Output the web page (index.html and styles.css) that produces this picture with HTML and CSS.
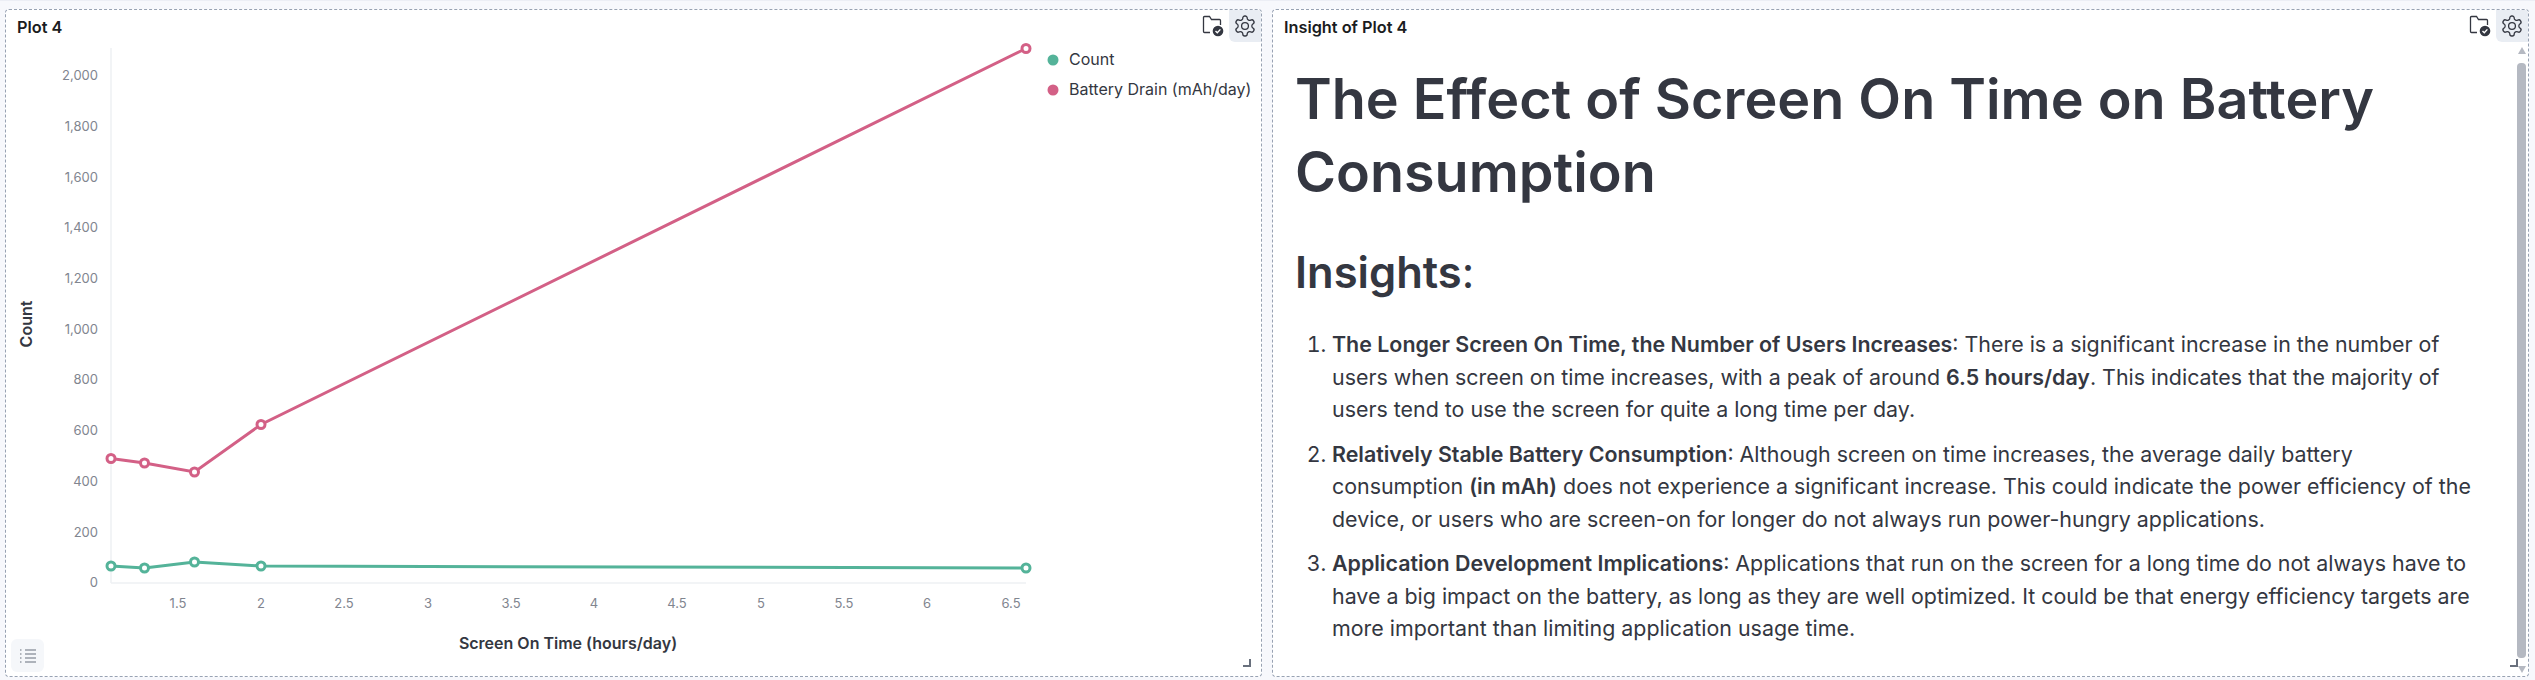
FILE: index.html

```html
<!DOCTYPE html>
<html lang='en-US'>
	<head>
		<title>Plot 4</title>
		<meta charset='utf-8'>
		<link rel="stylesheet" href="styles.css">
	</head>
	<body>
		<main class='dash'>
			<section class='panel'>
				<header class='panel-head'>
					<h3>Plot 4</h3>
					<span class='tool'>
						<svg width='22' height='22' viewBox='0 0 22 22' fill='none' stroke='#343741' stroke-width='1.3'><path d='M8 17.500H2.500a1 1 0 0 1-1-1V2.500a1 1 0 0 1 1-1h5l2 3h8a1 1 0 0 1 1 1V10'/><circle cx='16' cy='16' r='5.300' fill='#343741' stroke='none'/><path d='M13.500 16l1.800 1.800 3.100-3.400' stroke='#fff' stroke-width='1.400'/></svg>
					</span>
					<span class='tool tool-on'>
						<svg width='24' height='24' viewBox='0 0 24 24' fill='none' stroke='#343741' stroke-width='1.300'><path d='M12.220 2h-.44a2 2 0 0 0-2 2v.18a2 2 0 0 1-1 1.730l-.43.25a2 2 0 0 1-2 0l-.15-.08a2 2 0 0 0-2.730.73l-.22.38a2 2 0 0 0 .73 2.730l.15.1a2 2 0 0 1 1 1.720v.51a2 2 0 0 1-1 1.740l-.15.09a2 2 0 0 0-.73 2.730l.22.38a2 2 0 0 0 2.730.73l.15-.08a2 2 0 0 1 2 0l.43.25a2 2 0 0 1 1 1.730V20a2 2 0 0 0 2 2h.44a2 2 0 0 0 2-2v-.18a2 2 0 0 1 1-1.730l.43-.25a2 2 0 0 1 2 0l.15.08a2 2 0 0 0 2.730-.73l.22-.39a2 2 0 0 0-.73-2.730l-.15-.08a2 2 0 0 1-1-1.740v-.5a2 2 0 0 1 1-1.740l.15-.09a2 2 0 0 0 .73-2.730l-.22-.38a2 2 0 0 0-2.730-.73l-.15.08a2 2 0 0 1-2 0l-.43-.25a2 2 0 0 1-1-1.730V4a2 2 0 0 0-2-2z'/><circle cx='12' cy='12' r='3.400'/></svg>
					</span>
				</header>
				<svg class='chart' width='1255' height='668' viewBox='0 0 1255 668'>
					<g class='grid'>
						<line x1='105' y1='38' x2='105' y2='573'/>
						<line x1='105' y1='573' x2='1020' y2='573'/>
					</g>
					<g class='ticks' text-anchor='end'>
						<text x='92' y='70'>2,000</text>
						<text x='92' y='121'>1,800</text>
						<text x='92' y='172'>1,600</text>
						<text x='92' y='222'>1,400</text>
						<text x='92' y='273'>1,200</text>
						<text x='92' y='324'>1,000</text>
						<text x='92' y='374'>800</text>
						<text x='92' y='425'>600</text>
						<text x='92' y='476'>400</text>
						<text x='92' y='527'>200</text>
						<text x='92' y='577'>0</text>
					</g>
					<g class='ticks' text-anchor='middle'>
						<text x='172' y='598'>1.5</text>
						<text x='255' y='598'>2</text>
						<text x='338' y='598'>2.5</text>
						<text x='422' y='598'>3</text>
						<text x='505' y='598'>3.5</text>
						<text x='588' y='598'>4</text>
						<text x='671' y='598'>4.5</text>
						<text x='755' y='598'>5</text>
						<text x='838' y='598'>5.5</text>
						<text x='921' y='598'>6</text>
						<text x='1005' y='598'>6.5</text>
					</g>
					<text class='axis' x='562' y='639' text-anchor='middle'>Screen On Time (hours/day)</text>
					<text class='axis' transform='translate(26 314) rotate(-90)' text-anchor='middle'>Count</text>
					<polyline class='line-a' points='105,556 138.500,558 188.500,552 255,556 1020,558'/>
					<polyline class='line-b' points='105,448.500 138.500,453 188.500,462 255,414.500 1020,38.500'/>
					<g class='dots-a'>
						<circle cx='105' cy='556' r='4'/><circle cx='138.500' cy='558' r='4'/><circle cx='188.500' cy='552' r='4'/><circle cx='255' cy='556' r='4'/><circle cx='1020' cy='558' r='4'/>
					</g>
					<g class='dots-b'>
						<circle cx='105' cy='448.500' r='4'/><circle cx='138.500' cy='453' r='4'/><circle cx='188.500' cy='462' r='4'/><circle cx='255' cy='414.500' r='4'/><circle cx='1020' cy='38.500' r='4'/>
					</g>
					<circle cx='1047' cy='50' r='5.500' fill='#54b399'/>
					<text class='legend' x='1063' y='55'>Count</text>
					<circle cx='1047' cy='80' r='5.500' fill='#d36086'/>
					<text class='legend' x='1063' y='85'>Battery Drain (mAh/day)</text>
				</svg>
				<span class='list-btn'>
					<svg width='16' height='14' viewBox='0 0 16 14' stroke='#69707d' stroke-width='1.200'><path d='M0 1h2M0 5h2M0 9h2M0 13h2' stroke-dasharray='1.500 .5'/><path d='M5 1h11M5 5h11M5 9h11M5 13h11'/></svg>
				</span>
				<i class='grip'></i>
			</section>
			<section class='panel'>
				<header class='panel-head'>
					<h3>Insight of Plot 4</h3>
					<span class='tool'>
						<svg width='22' height='22' viewBox='0 0 22 22' fill='none' stroke='#343741' stroke-width='1.3'><path d='M8 17.500H2.500a1 1 0 0 1-1-1V2.500a1 1 0 0 1 1-1h5l2 3h8a1 1 0 0 1 1 1V10'/><circle cx='16' cy='16' r='5.300' fill='#343741' stroke='none'/><path d='M13.500 16l1.800 1.800 3.100-3.400' stroke='#fff' stroke-width='1.400'/></svg>
					</span>
					<span class='tool tool-on'>
						<svg width='24' height='24' viewBox='0 0 24 24' fill='none' stroke='#343741' stroke-width='1.300'><path d='M12.220 2h-.44a2 2 0 0 0-2 2v.18a2 2 0 0 1-1 1.730l-.43.25a2 2 0 0 1-2 0l-.15-.08a2 2 0 0 0-2.730.73l-.22.38a2 2 0 0 0 .73 2.730l.15.1a2 2 0 0 1 1 1.720v.51a2 2 0 0 1-1 1.740l-.15.09a2 2 0 0 0-.73 2.730l.22.38a2 2 0 0 0 2.730.73l.15-.08a2 2 0 0 1 2 0l.43.25a2 2 0 0 1 1 1.730V20a2 2 0 0 0 2 2h.44a2 2 0 0 0 2-2v-.18a2 2 0 0 1 1-1.730l.43-.25a2 2 0 0 1 2 0l.15.08a2 2 0 0 0 2.730-.73l.22-.39a2 2 0 0 0-.73-2.730l-.15-.08a2 2 0 0 1-1-1.740v-.5a2 2 0 0 1 1-1.740l.15-.09a2 2 0 0 0 .73-2.730l-.22-.38a2 2 0 0 0-2.730-.73l-.15.08a2 2 0 0 1-2 0l-.43-.25a2 2 0 0 1-1-1.730V4a2 2 0 0 0-2-2z'/><circle cx='12' cy='12' r='3.400'/></svg>
					</span>
				</header>
				<article class='md'>
					<h1>The Effect of Screen On Time on Battery Consumption</h1>
					<h2><b>Insights</b>:</h2>
					<ol>
						<li><b>The Longer Screen On Time, the Number of Users Increases</b>: There is a significant increase in the number of users when screen on time increases, with a peak of around <b>6.5 hours/day</b>. This indicates that the majority of users tend to use the screen for quite a long time per day.</li>
						<li><b>Relatively Stable Battery Consumption</b>: Although screen on time increases, the average daily battery consumption <b>(in mAh)</b> does not experience a significant increase. This could indicate the power efficiency of the device, or users who are screen-on for longer do not always run power-hungry applications.</li>
						<li><b>Application Development Implications</b>: Applications that run on the screen for a long time do not always have to have a big impact on the battery, as long as they are well optimized. It could be that energy efficiency targets are more important than limiting application usage time.</li>
					</ol>
				</article>
				<i class='grip'></i>
				<div class='scroll'>
					<i class='arrow-up'></i>
					<i class='thumb'></i>
					<i class='arrow-down'></i>
				</div>
			</section>
		</main>
	</body>
</html>
```

FILE: styles.css

```css
html,body{
	margin:0;
	height:100%;
	background:#f7f8fc;
	overflow:hidden;
}

*{
	box-sizing:border-box;
}

.dash{
	display:flex;
	gap:10px;
	height:680px;
	padding:8px 6px 3px 5px;
	border-top:1px solid #eceef5;
	font-family:Inter,"Noto Sans",sans-serif;
	color:#343741;
}

.panel{
	position:relative;
	flex:1 1 0;
	min-width:0;
	background:#fff;
	border:1px dashed #98a2b3;
	border-radius:4px;
	overflow:hidden;
}

.panel-head{
	display:flex;
	align-items:flex-start;
	height:33px;
}
.panel-head h3{
	flex:1;
	margin:0;
	padding:7px 0 0 11px;
	font-size:16.300px;
	line-height:20px;
	font-weight:600;
	color:#1a1c21;
}

.tool{
	display:flex;
	align-items:center;
	justify-content:center;
	width:32px;
	height:32px;
}
.tool-on{
	background:#e9edf3;
	border-radius:0 0 0 6px;
}

.chart{
	position:absolute;
	top:0;
	left:0;
}
.grid line{
	stroke:#eef0f3;
	stroke-width:1.500;
}
.ticks text{
	font-size:13px;
	fill:#81858f;
}
.axis{
	font-size:16px;
	font-weight:600;
	fill:#343741;
}
.legend{
	font-size:16px;
	fill:#343741;
}
.line-a,.line-b{
	fill:none;
	stroke-width:3;
}
.line-a{
	stroke:#54b399;
}
.line-b{
	stroke:#d36086;
}
.dots-a circle,.dots-b circle{
	fill:#fff;
	stroke-width:3;
}
.dots-a circle{
	stroke:#54b399;
}
.dots-b circle{
	stroke:#d36086;
}

.list-btn{
	position:absolute;
	left:5px;
	bottom:4px;
	display:flex;
	align-items:center;
	justify-content:center;
	width:33px;
	height:33px;
	background:#f5f7fa;
	border-radius:6px;
}

.grip{
	position:absolute;
	right:10px;
	bottom:9px;
	width:8px;
	height:8px;
	border-right:2px solid #69707d;
	border-bottom:2px solid #69707d;
}

.md{
	height:634px;
	padding:0 45px 0 22px;
	overflow:hidden;
}
.md h1{
	margin:19px 0 0;
	font-size:55.700px;
	line-height:73px;
	font-weight:600;
	color:#343741;
}
.md h2{
	margin:34px 0 0;
	font-size:43.500px;
	line-height:60px;
	font-weight:400;
}
.md h2 b,.md b{
	font-weight:600;
}
.md ol{
	margin:26px 0 0;
	padding:0 0 0 37px;
	font-size:21.400px;
	line-height:32.500px;
}
.md li{
	margin-bottom:12px;
}

.scroll{
	position:absolute;
	top:37px;
	right:2px;
	bottom:3px;
	width:9px;
	display:flex;
	flex-direction:column;
	align-items:center;
}
.thumb{
	flex:1;
	width:9px;
	margin:9px 0 8px;
	background:#b5b9c2;
	border-radius:4px;
}
.arrow-up{
	border:4.500px solid transparent;
	border-top:0;
	border-bottom:7px solid #b5b9c2;
}
.arrow-down{
	border:4.500px solid transparent;
	border-bottom:0;
	border-top:7px solid #b5b9c2;
}
```
